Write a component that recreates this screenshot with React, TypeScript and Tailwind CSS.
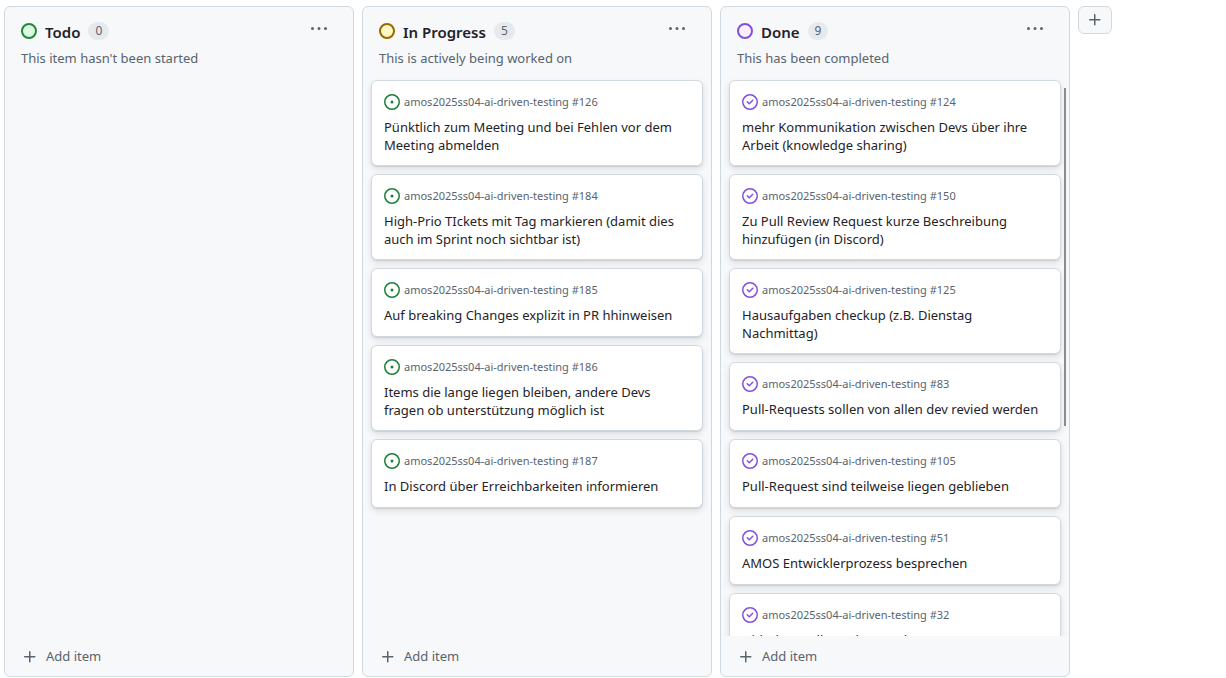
import React from "react";

type Status = "open" | "done";
type Item = { id: number; title: string };
type ColumnData = {
  name: string;
  count: number;
  description: string;
  dot: string;
  status: Status;
  items: Item[];
  scrolls?: boolean;
};

const REPO = "amos2025ss04-ai-driven-testing";

const columns: ColumnData[] = [
  {
    name: "Todo",
    count: 0,
    description: "This item hasn't been started",
    dot: "border-[#1f883d] bg-[#dafbe1]",
    status: "open",
    items: [],
  },
  {
    name: "In Progress",
    count: 5,
    description: "This is actively being worked on",
    dot: "border-[#9a6700] bg-[#fff8c5]",
    status: "open",
    items: [
      { id: 126, title: "Pünktlich zum Meeting und bei Fehlen vor dem Meeting abmelden" },
      { id: 184, title: "High-Prio TIckets mit Tag markieren (damit dies auch im Sprint noch sichtbar ist)" },
      { id: 185, title: "Auf breaking Changes explizit in PR hhinweisen" },
      { id: 186, title: "Items die lange liegen bleiben, andere Devs fragen ob unterstützung möglich ist" },
      { id: 187, title: "In Discord über Erreichbarkeiten informieren" },
    ],
  },
  {
    name: "Done",
    count: 9,
    description: "This has been completed",
    dot: "border-[#8250df] bg-[#fbefff]",
    status: "done",
    scrolls: true,
    items: [
      { id: 124, title: "mehr Kommunikation zwischen Devs über ihre Arbeit (knowledge sharing)" },
      { id: 150, title: "Zu Pull Review Request kurze Beschreibung hinzufügen (in Discord)" },
      { id: 125, title: "Hausaufgaben checkup (z.B. Dienstag Nachmittag)" },
      { id: 83, title: "Pull-Requests sollen von allen dev revied werden" },
      { id: 105, title: "Pull-Request sind teilweise liegen geblieben" },
      { id: 51, title: "AMOS Entwicklerprozess besprechen" },
      { id: 32, title: "Github Handle auch ausgeben" },
    ],
  },
];

function StatusIcon({ status }: { status: Status }) {
  if (status === "open") {
    return (
      <svg viewBox="0 0 16 16" className="size-4 shrink-0 fill-[#1a7f37]" role="img" aria-label="Open issue">
        <path d="M8 9.5a1.5 1.5 0 1 0 0-3 1.5 1.5 0 0 0 0 3Z" />
        <path d="M8 0a8 8 0 1 1 0 16A8 8 0 0 1 8 0ZM1.5 8a6.5 6.5 0 1 0 13 0 6.5 6.5 0 0 0-13 0Z" />
      </svg>
    );
  }
  return (
    <svg viewBox="0 0 16 16" className="size-4 shrink-0 fill-[#8250df]" role="img" aria-label="Closed issue">
      <path d="M11.28 6.78a.75.75 0 0 0-1.06-1.06L7.25 8.69 5.78 7.22a.75.75 0 0 0-1.06 1.06l2 2a.75.75 0 0 0 1.06 0l3.5-3.5Z" />
      <path d="M16 8A8 8 0 1 1 0 8a8 8 0 0 1 16 0Zm-1.5 0a6.5 6.5 0 1 0-13 0 6.5 6.5 0 0 0 13 0Z" />
    </svg>
  );
}

function PlusIcon() {
  return (
    <svg viewBox="0 0 16 16" className="size-4 shrink-0 fill-current" aria-hidden="true">
      <path d="M7.75 2a.75.75 0 0 1 .75.75V7h4.25a.75.75 0 0 1 0 1.5H8.5v4.25a.75.75 0 0 1-1.5 0V8.5H2.75a.75.75 0 0 1 0-1.5H7V2.75A.75.75 0 0 1 7.75 2Z" />
    </svg>
  );
}

function KebabIcon() {
  return (
    <svg viewBox="0 0 16 16" className="size-4 fill-current" aria-hidden="true">
      <path d="M8 9a1.5 1.5 0 1 0 0-3 1.5 1.5 0 0 0 0 3ZM1.5 9a1.5 1.5 0 1 0 0-3 1.5 1.5 0 0 0 0 3Zm13 0a1.5 1.5 0 1 0 0-3 1.5 1.5 0 0 0 0 3Z" />
    </svg>
  );
}

function Card({ item, status }: { item: Item; status: Status }) {
  return (
    <li className="shrink-0 rounded-md border border-[#d1d9e0] bg-white px-3 pt-3 pb-[11px] shadow-[0_1px_1px_rgba(31,35,40,0.1),0_3px_6px_rgba(31,35,40,0.12)]">
      <div className="flex h-[18px] items-center gap-1 text-[11px] leading-[18px] text-[#59636e]">
        <StatusIcon status={status} />
        <span>
          {REPO} #{item.id}
        </span>
      </div>
      <a href={`#${item.id}`} className="mt-[7px] block min-h-[19px] text-[13px] leading-[18px] text-[#1f2328]">
        {item.title}
      </a>
    </li>
  );
}

function Column({ column }: { column: ColumnData }) {
  return (
    <section className="flex w-[350px] shrink-0 flex-col overflow-hidden rounded-md border border-[#d1d9e0] bg-[#f6f8fa]">
      <header className="px-4 pt-3.5">
        <div className="flex items-start justify-between">
          <div className="flex h-5 items-center">
            <span className={`size-4 rounded-full border-2 ${column.dot}`} />
            <h2 className="ml-2 pt-0.5 text-[15px] leading-5 font-semibold text-[#1f2328]">{column.name}</h2>
            <span className="ml-2 min-w-5 rounded-full bg-[#e7eaed] px-[7px] text-center text-[12px] leading-[18px] text-[#59636e]">
              {column.count}
            </span>
          </div>
          <button type="button" aria-label={`More actions for ${column.name}`} className="mr-2.5 text-[#59636e]">
            <KebabIcon />
          </button>
        </div>
        <p className="mt-[7px] text-[13px] leading-5 text-[#59636e]">{column.description}</p>
      </header>
      <div className="relative mt-1 flex min-h-0 flex-1 flex-col">
        <ul className="flex min-h-0 flex-1 flex-col gap-2 overflow-y-auto px-2 pt-2 [scrollbar-width:none]">
          {column.items.map((item) => (
            <Card key={item.id} item={item} status={column.status} />
          ))}
        </ul>
        {column.scrolls && <div className="absolute top-4 right-[3px] h-3/5 w-0.5 bg-[#8b8b8b]" />}
      </div>
      <button type="button" className="flex h-10 shrink-0 items-center gap-2 px-[17px] pt-0.5 text-[13px] text-[#59636e]">
        <PlusIcon />
        <span>Add item</span>
      </button>
    </section>
  );
}

export default function App() {
  return (
    <main className="flex h-screen items-stretch gap-2 overflow-x-auto bg-white px-1 pt-1.5 pb-px font-['Noto_Sans','Open_Sans',sans-serif]">
      {columns.map((column) => (
        <Column key={column.name} column={column} />
      ))}
      <button
        type="button"
        aria-label="Add a new column"
        className="flex h-7 w-[34px] shrink-0 items-center justify-center rounded-md border border-[#d1d9e0] bg-[#f6f8fa] text-[#59636e]"
      >
        <PlusIcon />
      </button>
    </main>
  );
}
